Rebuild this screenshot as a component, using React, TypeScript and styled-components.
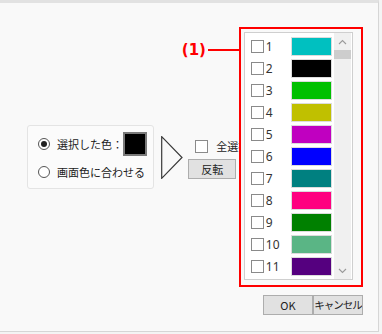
import styled, { createGlobalStyle } from "styled-components";

const GlobalStyle = createGlobalStyle`
  html, body {
    margin: 0;
    padding: 0;
    background: #f4f4f4;
  }
  body {
    font-family: "Noto Sans CJK JP", "Noto Sans", sans-serif;
  }
`;

const Window = styled.div`
  box-sizing: border-box;
  width: 379px;
  height: 332px;
  background: #f9f9f9;
  border-top: 3px solid #e2e2e2;
  border-right: 1px solid #d6d6d6;
  border-bottom: 1px solid #d6d6d6;
  display: flex;
  flex-direction: column;
  padding: 24px 15px 0 27px;
`;

const MainRow = styled.div`
  display: flex;
  align-items: center;
  height: 260px;
`;

const GroupBox = styled.div`
  box-sizing: border-box;
  width: 128px;
  height: 64px;
  border: 1px solid #e4e4e4;
  border-radius: 3px;
  background: #fbfbfb;
  padding: 4px 0 0 10px;
  display: flex;
  flex-direction: column;
`;

const RadioRow = styled.label<{ $h: number }>`
  display: flex;
  align-items: center;
  height: ${(p) => p.$h}px;
  font-size: 11px;
  color: #222;
  white-space: nowrap;
`;

const Radio = styled.span<{ $on?: boolean }>`
  box-sizing: border-box;
  width: 12px;
  height: 12px;
  border-radius: 50%;
  border: 1px solid #555;
  background: #fff;
  margin-right: 7px;
  display: flex;
  align-items: center;
  justify-content: center;
  &::after {
    content: "";
    width: 6px;
    height: 6px;
    border-radius: 50%;
    background: ${(p) => (p.$on ? "#222" : "transparent")};
  }
`;

const ColorBox = styled.span`
  box-sizing: border-box;
  width: 24px;
  height: 24px;
  background: #000;
  border: 2px solid #7a7a7a;
`;

const Arrow = styled.svg`
  margin-left: 7px;
  flex: none;
`;

const MiddleCol = styled.div`
  width: 51px;
  margin-left: 5px;
  overflow: hidden;
  display: flex;
  flex-direction: column;
  gap: 5px;
  margin-top: 3px;
`;

const CheckRow = styled.label`
  display: flex;
  align-items: center;
  font-size: 11px;
  color: #222;
  white-space: nowrap;
  padding-left: 7px;
`;

const Check = styled.span<{ $gap?: number }>`
  box-sizing: border-box;
  flex: none;
  width: 13px;
  height: 13px;
  border: 1px solid #8a8a8a;
  background: #fff;
  margin-right: ${(p) => p.$gap ?? 2}px;
`;

const Button = styled.button<{ $w: number; $tight?: boolean }>`
  box-sizing: border-box;
  width: ${(p) => p.$w}px;
  height: 20px;
  padding: 0;
  background: #e1e1e1;
  border: 1px solid #adadad;
  font-family: "Noto Sans CJK JP", "Noto Sans", sans-serif;
  font-size: ${(p) => (p.$tight ? 10.5 : 11)}px;
  letter-spacing: ${(p) => (p.$tight ? -1 : 0)}px;
  white-space: nowrap;
  overflow: hidden;
  color: #222;
  line-height: 18px;
`;

const RedFrame = styled.div`
  position: relative;
  box-sizing: border-box;
  width: 125px;
  height: 260px;
  border: 2px solid #ff0000;
  padding: 3px 8px 5px 3px;
`;

const Callout = styled.div`
  position: absolute;
  left: -59px;
  top: 12px;
  display: flex;
  align-items: center;
  color: #ff0000;
  font-family: "DejaVu Sans", sans-serif;
  font-weight: bold;
  font-size: 15px;
  &::after {
    content: "";
    width: 33px;
    height: 1.5px;
    margin-left: 2px;
    background: #ff0000;
  }
`;

const ListBox = styled.div`
  box-sizing: border-box;
  height: 100%;
  border: 1px solid #cfcfcf;
  background: #fff;
  display: flex;
  overflow: hidden;
`;

const Items = styled.div`
  flex: 1;
  padding: 2px 0 0 6px;
`;

const Item = styled.div`
  display: flex;
  align-items: center;
  height: 22px;
`;

const Num = styled.span`
  width: 25px;
  font-family: "Noto Sans", sans-serif;
  font-size: 12px;
  color: #333;
`;

const Swatch = styled.span<{ $c: string }>`
  box-sizing: border-box;
  width: 41px;
  height: 19px;
  background: ${(p) => p.$c};
  border: 1px solid #dcdcdc;
`;

const ScrollBar = styled.div`
  width: 17px;
  margin-right: 1px;
  background: #f0f0f0;
  display: flex;
  flex-direction: column;
  align-items: center;
`;

const ScrollBtn = styled.div`
  height: 17px;
  display: flex;
  align-items: center;
  justify-content: center;
`;

const Thumb = styled.div`
  width: 17px;
  height: 9px;
  background: #cdcdcd;
`;

const Spacer = styled.div`
  flex: 1;
`;

const Footer = styled.div`
  display: flex;
  justify-content: flex-end;
  margin-top: 8px;
`;

const swatches = [
  "#00c0c0",
  "#000000",
  "#00c000",
  "#c0c000",
  "#c000c0",
  "#0000ff",
  "#008080",
  "#ff0080",
  "#008000",
  "#5ab585",
  "#55007f",
  "#d03838",
];

const Chevron = ({ up }: { up?: boolean }) => (
  <svg width="9" height="6" viewBox="0 0 9 6">
    <path
      d={up ? "M1 5 L4.5 1.5 L8 5" : "M1 1 L4.5 4.5 L8 1"}
      fill="none"
      stroke="#9a9a9a"
      strokeWidth="1.1"
    />
  </svg>
);

export default function App() {
  return (
    <>
      <GlobalStyle />
      <Window>
        <MainRow>
          <GroupBox>
            <RadioRow $h={28}>
              <Radio $on />
              選択した色：
              <ColorBox />
            </RadioRow>
            <RadioRow $h={28}>
              <Radio />
              画面色に合わせる
            </RadioRow>
          </GroupBox>
          <Arrow width="22" height="43" viewBox="0 0 22 43">
            <path d="M0.7 0.7 L21 21.5 L0.7 42.3 Z" fill="none" stroke="#3a3a3a" strokeWidth="1.2" />
          </Arrow>
          <MiddleCol>
            <CheckRow>
              <Check $gap={8} />
              全選択
            </CheckRow>
            <Button $w={48}>反転</Button>
          </MiddleCol>
          <RedFrame>
            <Callout>(1)</Callout>
            <ListBox>
              <Items>
                {swatches.map((c, i) => (
                  <Item key={i}>
                    <Check />
                    <Num>{i + 1 < 12 ? i + 1 : ""}</Num>
                    <Swatch $c={c} />
                  </Item>
                ))}
              </Items>
              <ScrollBar>
                <ScrollBtn>
                  <Chevron up />
                </ScrollBtn>
                <Thumb />
                <Spacer />
                <ScrollBtn>
                  <Chevron />
                </ScrollBtn>
              </ScrollBar>
            </ListBox>
          </RedFrame>
        </MainRow>
        <Footer>
          <Button $w={50}>OK</Button>
          <Button $w={50} $tight>
            キャンセル
          </Button>
        </Footer>
      </Window>
    </>
  );
}
